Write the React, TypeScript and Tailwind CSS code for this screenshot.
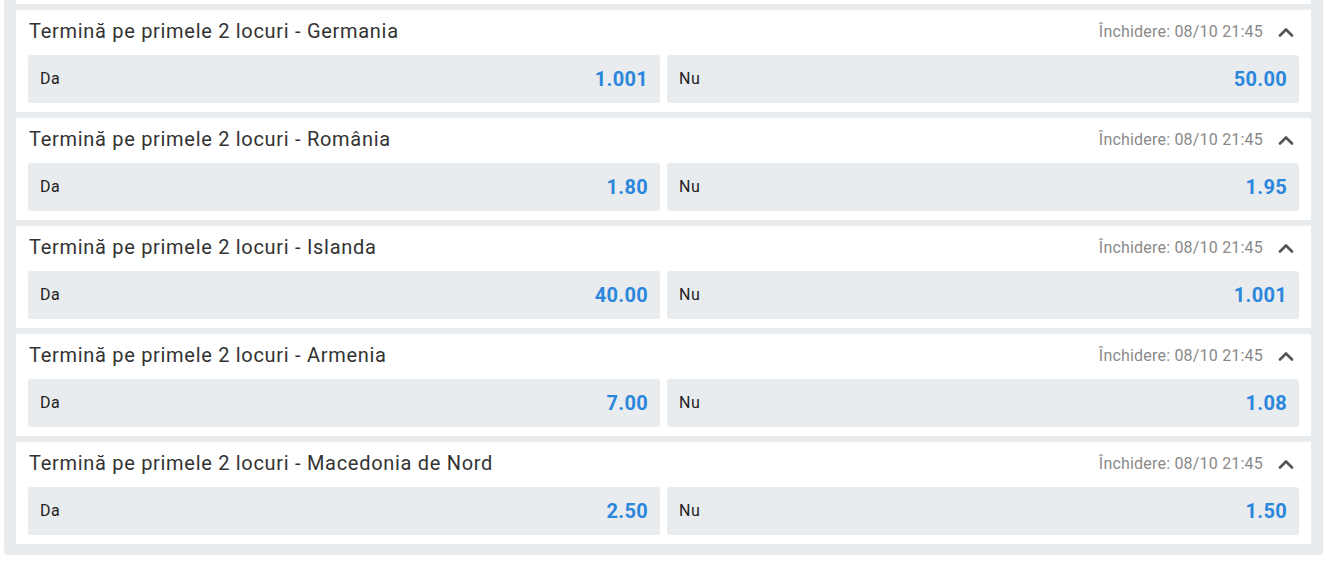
import React from 'react';

type Market = { team: string; da: string; nu: string };

const markets: Market[] = [
  { team: 'Germania', da: '1.001', nu: '50.00' },
  { team: 'România', da: '1.80', nu: '1.95' },
  { team: 'Islanda', da: '40.00', nu: '1.001' },
  { team: 'Armenia', da: '7.00', nu: '1.08' },
  { team: 'Macedonia de Nord', da: '2.50', nu: '1.50' },
];

function ChevronUp() {
  return (
    <svg width="16" height="10" viewBox="0 0 16 10" fill="none" className="text-[#555] mr-[5px]">
      <path d="M2 8.5 L8 2.5 L14 8.5" stroke="currentColor" strokeWidth="2.6" strokeLinecap="round" strokeLinejoin="round" />
    </svg>
  );
}

function Odd({ label, value }: { label: string; value: string }) {
  return (
    <button className="flex-1 h-[48px] flex items-center justify-between pl-3 pr-3 bg-[#e9ecef] rounded-[3px] cursor-pointer">
      <span className="text-[16px] text-[#222] tracking-[0.6px]">{label}</span>
      <span className="text-[20px] font-bold text-[#2a87dc] tracking-[0.3px]">{value}</span>
    </button>
  );
}

export default function App() {
  return (
    <div className="bg-white w-[1326px] h-[562px] overflow-hidden font-['Roboto',_'Liberation_Sans',_sans-serif]">
      <div className="ml-[4px] w-[1319px] -mt-[2px] bg-[#e9ecef] rounded-b-[4px] px-3 pb-[11px] flex flex-col gap-[6px]">
        {/* tail of the previous card */}
        <div className="h-[6px] bg-white" />
        {markets.map(m => (
          <div key={m.team} className="bg-white h-[102px] px-3 flex flex-col">
            <div className="h-[45px] flex items-center justify-between">
              <span className="text-[20px] text-[#333] pl-[1px] -mt-[4px] tracking-[0.7px]">Termină pe primele 2 locuri - {m.team}</span>
              <div className="flex items-center gap-[15px] -mt-[2px]">
                <span className="text-[16px] text-[#8a8a8a] tracking-[0.2px]">Închidere: 08/10 21:45</span>
                <ChevronUp />
              </div>
            </div>
            <div className="flex gap-[7px]">
              <Odd label="Da" value={m.da} />
              <Odd label="Nu" value={m.nu} />
            </div>
          </div>
        ))}
      </div>
    </div>
  );
}
